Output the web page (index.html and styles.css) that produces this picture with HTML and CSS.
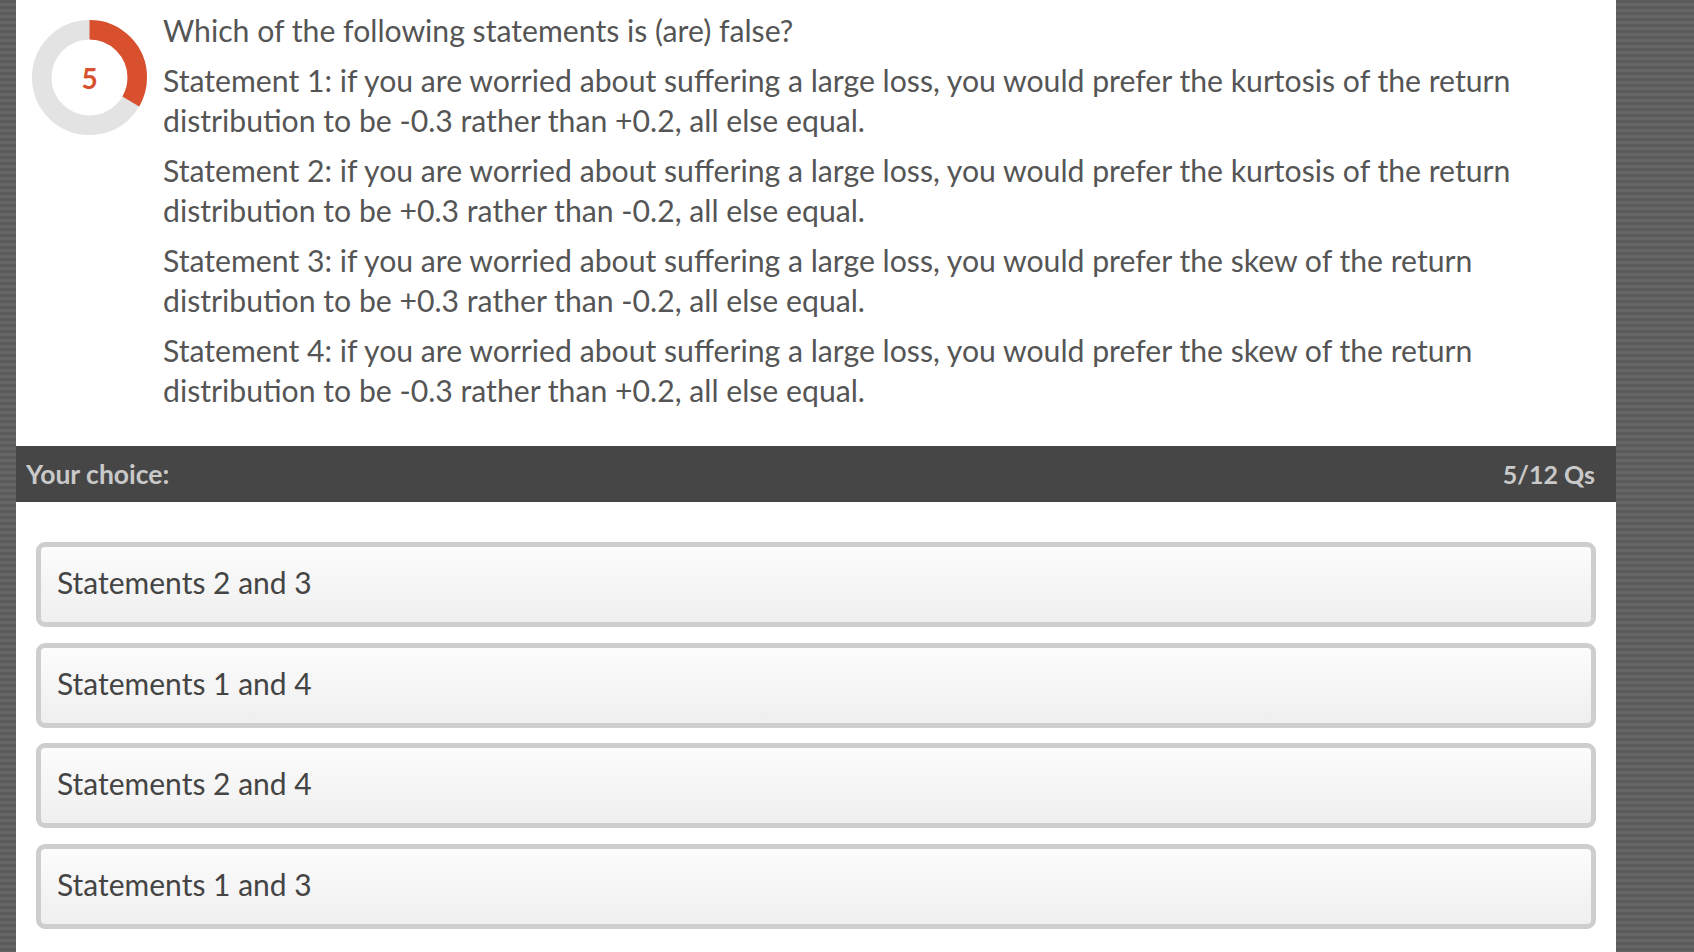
FILE: index.html
```html
<!DOCTYPE html>
<html lang="en">
<head>
<meta charset="utf-8">
<title>Quiz</title>
<link rel="stylesheet" href="styles.css">
</head>
<body>
<div class="panel">
  <div class="question">
    <div class="donut">
      <svg width="115" height="115" viewBox="0 0 115 115">
        <circle cx="57.5" cy="57.5" r="47.75" fill="none" stroke="#e3e3e3" stroke-width="19.5"/>
        <circle cx="57.5" cy="57.5" r="47.75" fill="none" stroke="#d9502f" stroke-width="19.5" stroke-dasharray="100 200" transform="rotate(-90 57.5 57.5)"/>
      </svg>
      <span class="donut-num">5</span>
    </div>
    <div class="qtext">
      <p>Which of the following statements is (are) false?</p>
      <p>Statement 1: if you are worried about suffering a large loss, you would prefer the kurtosis of the return distribution to be -0.3 rather than +0.2, all else equal.</p>
      <p>Statement 2: if you are worried about suffering a large loss, you would prefer the kurtosis of the return distribution to be +0.3 rather than -0.2, all else equal.</p>
      <p>Statement 3: if you are worried about suffering a large loss, you would prefer the skew of the return distribution to be +0.3 rather than -0.2, all else equal.</p>
      <p>Statement 4: if you are worried about suffering a large loss, you would prefer the skew of the return distribution to be -0.3 rather than +0.2, all else equal.</p>
    </div>
  </div>
  <div class="bar">
    <span class="bar-label">Your choice:</span>
    <span class="bar-count">5/12 Qs</span>
  </div>
  <div class="options">
    <div class="option">Statements 2 and 3</div>
    <div class="option">Statements 1 and 4</div>
    <div class="option">Statements 2 and 4</div>
    <div class="option">Statements 1 and 3</div>
  </div>
</div>
</body>
</html>
```
FILE: styles.css
```css
html, body {
  margin: 0;
  height: 100%;
}
body {
  background: repeating-linear-gradient(to bottom, #5b5b5b 0, #5b5b5b 3px, #656565 3px, #656565 6px);
  font-family: "Lato", "Liberation Sans", sans-serif;
  overflow: hidden;
}
.panel {
  margin-left: 16px;
  width: 1600px;
  height: 100%;
  background: #fff;
}
.question {
  display: flex;
  gap: 16px;
  padding: 10px 20px 26px 16px;
}
.donut {
  position: relative;
  flex: 0 0 115px;
  width: 115px;
  height: 115px;
  margin-top: 10px;
}
.donut svg {
  display: block;
}
.donut-num {
  position: absolute;
  inset: 0;
  display: flex;
  align-items: center;
  justify-content: center;
  color: #d9502f;
  font-weight: 700;
  font-size: 28px;
}
.qtext {
  color: #555;
  font-size: 30.2px;
  line-height: 40px;
}
.qtext p {
  margin: 0 0 10px;
}
.bar {
  display: flex;
  justify-content: space-between;
  align-items: center;
  height: 56px;
  padding: 0 21px 0 10px;
  background: #464646;
  color: #c9c9c9;
  font-weight: 700;
}
.bar-label {
  font-size: 26.5px;
}
.bar-count {
  font-size: 25px;
}
.options {
  display: flex;
  flex-direction: column;
  gap: 15.5px;
  padding: 40px 20px 0;
}
.option {
  height: 70px;
  display: flex;
  align-items: center;
  padding: 0 0 5px 16px;
  border: 5px solid #cecece;
  border-radius: 9px;
  background: linear-gradient(to bottom, #fcfcfc, #efefef);
  color: #444;
  font-size: 30px;
  line-height: 1;
}
```
